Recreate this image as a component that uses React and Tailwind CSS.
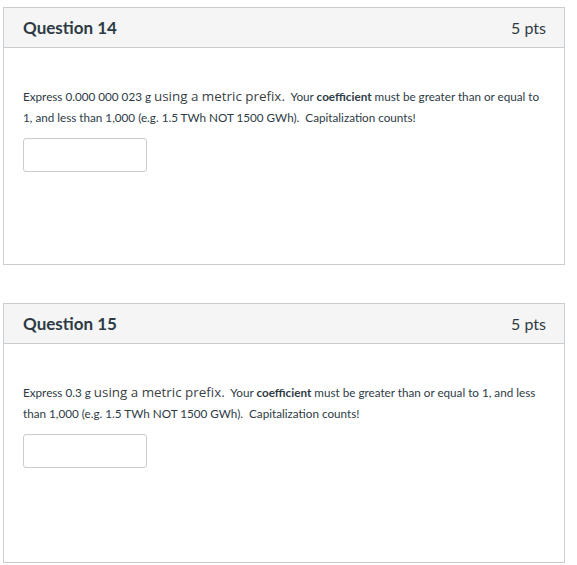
export default function App() {
  const Q = ({ num, amount, rest1, pb }) => (
    <div className="border border-[#c7cdd1] bg-white">
      <div className="h-[40px] bg-[#f5f5f5] border-b border-[#c7cdd1] flex items-center justify-between pl-[19px] pr-[18px]">
        <span className="font-['Lato'] font-bold text-[17px] text-[#2d3b45]">Question {num}</span>
        <span className="font-['Lato'] text-[16px] text-[#2d3b45]">5 pts</span>
      </div>
      <div className={"pl-[19px] pr-[19px] pt-[38px] " + pb}>
        <p className="font-['Lato'] text-[11.7px] leading-[21px] text-[#2d3b45]">
          Express {amount} g <span className="font-['Open_Sans'] text-[13.4px] text-[#3a3f46]">using a metric prefix.</span>{" "}
          {"\u00a0"}Your <b>coefficient</b> {rest1}
        </p>
        <div className="mt-[10px] w-[124px] h-[34px] border border-[#ccc] rounded-[3px] bg-white" />
      </div>
    </div>
  );
  const rest = <>must be greater than or equal to 1, and less than 1,000 (e.g. 1.5 TWh NOT 1500 GWh).{"\u00a0\u00a0"}Capitalization counts!</>;
  return (
    <div className="w-[577px] h-[565px] bg-white pt-[7px] pl-[3px] pr-[12px] flex flex-col gap-[38px]">
      <Q num={14} amount="0.000 000 023" rest1={rest} pb="pb-[92px]" />
      <Q num={15} amount="0.3" rest1={rest} pb="pb-[94px]" />
    </div>
  );
}
